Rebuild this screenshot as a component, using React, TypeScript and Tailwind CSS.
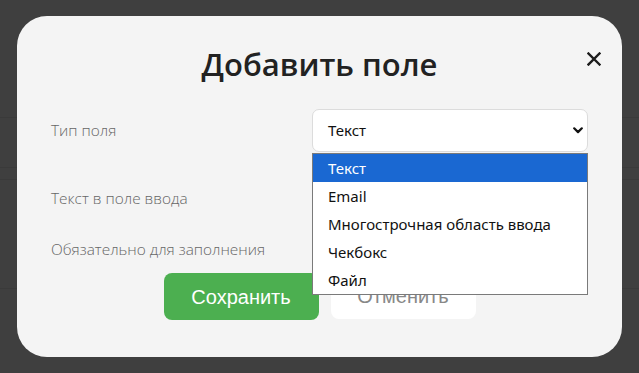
import React from 'react';

const options = ['Текст', 'Email', 'Многострочная область ввода', 'Чекбокс', 'Файл'];

function Chevron() {
  return (
    <svg width="10" height="7" viewBox="0 0 10 7" className="text-[#111]">
      <path d="M1.2 1.3 5 5.1 8.8 1.3" fill="none" stroke="currentColor" strokeWidth="2.2" strokeLinecap="round" strokeLinejoin="round" />
    </svg>
  );
}

function CloseIcon() {
  return (
    <svg width="14" height="14" viewBox="0 0 14 14" className="text-[#1c1c1c]">
      <path d="M1.5 1.5 12.5 12.5M12.5 1.5 1.5 12.5" fill="none" stroke="currentColor" strokeWidth="2.4" strokeLinecap="square" />
    </svg>
  );
}

export default function App() {
  return (
    <div className="relative h-[373px] w-full overflow-hidden bg-[#3f3f3f] font-['Open_Sans',sans-serif]">
      {/* page behind the overlay */}
      <div className="flex flex-col">
        <div className="h-[118px] border-b border-[#3a3a3a]" />
        <div className="h-[50px] border-b border-[#3a3a3a]" />
        <div className="h-[12px] border-b border-[#3a3a3a]" />
        <div className="h-[109px] border-b border-[#3a3a3a]" />
      </div>

      <div className="absolute inset-0 flex items-center justify-center">
        <div className="relative w-[605px] rounded-[30px] bg-[#f4f4f4] px-[34px] pt-[28px] pb-[37px]">
          <button className="absolute right-[21px] top-[36px]">
            <CloseIcon />
          </button>

          <h2 className="text-center text-[31px] font-semibold leading-[40px] text-[#222]">Добавить поле</h2>

          <div className="mt-[25px] grid grid-cols-[261px_276px] items-center text-[15.4px] font-light text-[#666]">
            <div>Тип поля</div>
            <div className="relative">
              <div className="flex h-[43px] items-center justify-between rounded-[7px] border border-[#dcdcdc] bg-white pl-[15px] pr-[4px] font-['Noto_Sans',sans-serif] text-[15px] font-normal text-[#111]">
                <span>Текст</span>
                <Chevron />
              </div>
              <ul className="absolute left-0 top-[44px] z-10 w-full border border-[#7a7a7a] bg-white font-['Noto_Sans',sans-serif] text-[15px] font-normal text-[#111]">
                {options.map((o, i) => (
                  <li
                    key={o}
                    className={
                      i === 0
                        ? 'flex h-[28px] items-center bg-[#1a68d2] pl-[15px] text-white'
                        : 'flex h-[28px] items-center pl-[15px]'
                    }
                  >
                    {o}
                  </li>
                ))}
              </ul>
            </div>

            <div className="mt-[25px]">Текст в поле ввода</div>
            <div className="mt-[25px] h-[43px] rounded-[7px] border border-[#dcdcdc] bg-white" />

            <div className="mt-[20px] flex h-[20px] items-center">Обязательно для заполнения</div>
            <div className="mt-[20px] h-[20px]">
              <div className="h-[18px] w-[18px] rounded-[3px] border border-[#999] bg-white" />
            </div>
          </div>

          <div className="mt-[13px] flex justify-center gap-[12px] font-['Liberation_Sans',sans-serif] text-[20px]">
            <button className="h-[47px] w-[155px] rounded-[8px] bg-[#4caf50] text-white">Сохранить</button>
            <button className="h-[46px] w-[145px] rounded-[8px] bg-white text-[#888]">Отменить</button>
          </div>
        </div>
      </div>
    </div>
  );
}
